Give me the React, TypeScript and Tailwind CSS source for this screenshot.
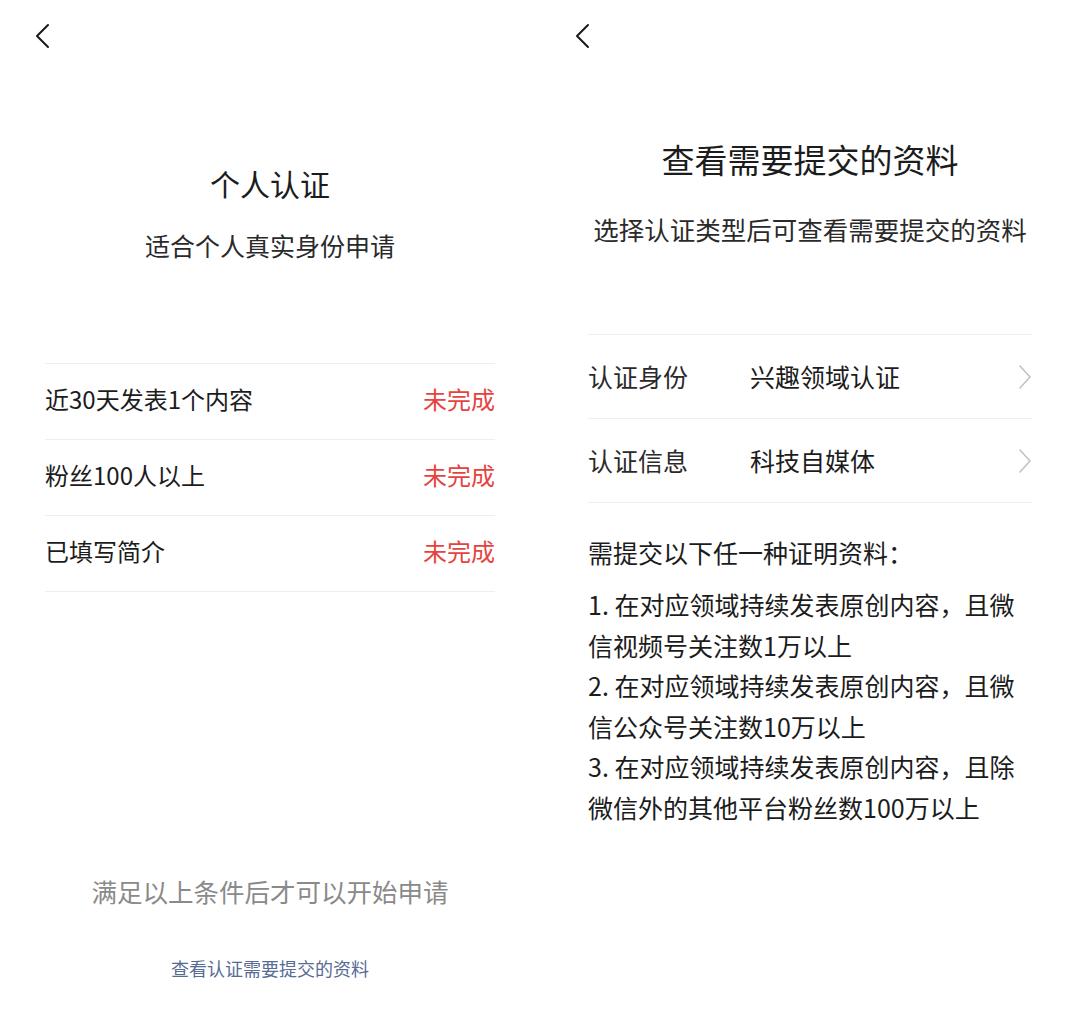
import React from "react";

const font = { fontFamily: '"Noto Sans CJK SC", "Noto Sans", sans-serif' };

function Back() {
  return (
    <svg width="16" height="26" viewBox="0 0 16 26" fill="none">
      <path d="M13 2 L2 13 L13 24" stroke="#1a1a1a" strokeWidth="2" strokeLinecap="round" strokeLinejoin="round" />
    </svg>
  );
}

function Chevron() {
  return (
    <svg width="14" height="26" viewBox="0 0 14 26" fill="none">
      <path d="M2 2 L12 13 L2 24" stroke="#c2c2c2" strokeWidth="1.6" strokeLinecap="round" strokeLinejoin="round" />
    </svg>
  );
}

const reqs = ["近30天发表1个内容", "粉丝100人以上", "已填写简介"];

export default function App() {
  return (
    <div className="flex w-[1080px] h-[1022px] bg-white text-[#1c1c1c]" style={font}>
      {/* Left panel */}
      <div className="w-[540px] flex flex-col">
        <div className="h-[72px] flex items-center pl-[35px]">
          <Back />
        </div>
        <div className="mt-[90px] text-center text-[30px] leading-[42px]">个人认证</div>
        <div className="mt-[23px] text-center text-[25px] leading-[36px] text-[#2a2a2a]">适合个人真实身份申请</div>
        <div className="mt-[100px] mx-[45px] border-b border-[#efefef]">
          {reqs.map((r) => (
            <div key={r} className="h-[76px] pb-[5px] border-t border-[#efefef] flex items-center justify-between text-[24px]">
              <span>{r}</span>
              <span className="text-[#e64340]">未完成</span>
            </div>
          ))}
        </div>
        <div className="mt-[281px] text-center text-[25.5px] leading-[36px] text-[#8a8a8a]">满足以上条件后才可以开始申请</div>
        <div className="mt-[46px] text-center text-[18px] leading-[26px] text-[#576b95]">查看认证需要提交的资料</div>
      </div>

      {/* Right panel */}
      <div className="w-[540px] flex flex-col">
        <div className="h-[72px] flex items-center pl-[35px]">
          <Back />
        </div>
        <div className="mt-[64px] text-center text-[33px] leading-[46px]">查看需要提交的资料</div>
        <div className="mt-[29px] text-center text-[25.5px] leading-[36px] text-[#2a2a2a]">选择认证类型后可查看需要提交的资料</div>
        <div className="mt-[87px] ml-[48px] mr-[48px] border-b border-[#efefef]">
          {[
            ["认证身份", "兴趣领域认证"],
            ["认证信息", "科技自媒体"],
          ].map(([k, v]) => (
            <div key={k} className="h-[84px] border-t border-[#efefef] flex items-center text-[25px]">
              <span className="w-[162px] text-[#2a2a2a]">{k}</span>
              <span className="flex-1">{v}</span>
              <Chevron />
            </div>
          ))}
        </div>
        <div className="ml-[48px] mr-[48px]">
          <div className="mt-[31px] text-[25px] leading-[36px]">需提交以下任一种证明资料：</div>
          <div className="mt-[14px] text-[25px] leading-[40.5px]">
            <p>1. 在对应领域持续发表原创内容，且微信视频号关注数1万以上</p>
            <p>2. 在对应领域持续发表原创内容，且微信公众号关注数10万以上</p>
            <p>3. 在对应领域持续发表原创内容，且除微信外的其他平台粉丝数100万以上</p>
          </div>
        </div>
      </div>
    </div>
  );
}
